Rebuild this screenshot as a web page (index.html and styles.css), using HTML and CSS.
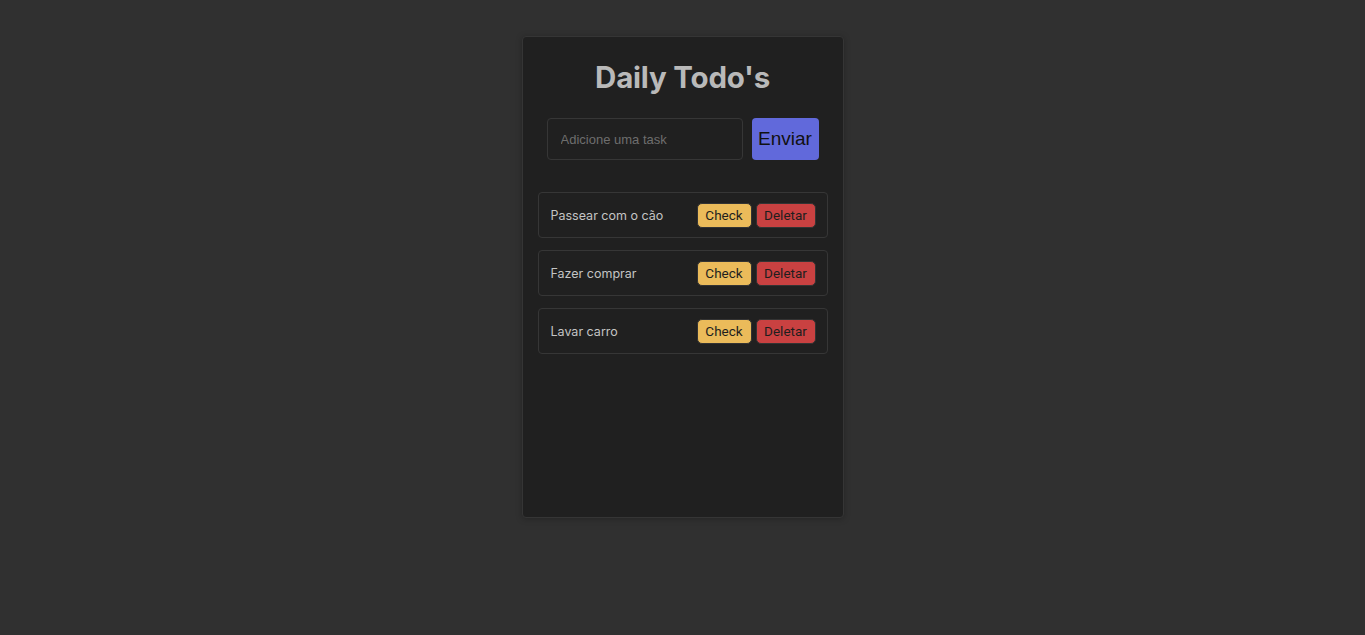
FILE: index.html
```html
<!DOCTYPE html>
<html lang="pt">
<head>
<meta charset="utf-8">
<title>Daily Todo's</title>
<link rel="stylesheet" href="styles.css">
</head>
<body>
<main class="card">
  <h1 class="title">Daily Todo's</h1>
  <form class="add-form">
    <input class="add-input" type="text" placeholder="Adicione uma task">
    <button class="add-btn" type="button">Enviar</button>
  </form>
  <ul class="tasks">
    <li class="task"><span class="task-text">Passear com o cão</span><div class="actions"><button class="btn btn-check">Check</button><button class="btn btn-del">Deletar</button></div></li>
    <li class="task"><span class="task-text">Fazer comprar</span><div class="actions"><button class="btn btn-check">Check</button><button class="btn btn-del">Deletar</button></div></li>
    <li class="task"><span class="task-text">Lavar carro</span><div class="actions"><button class="btn btn-check">Check</button><button class="btn btn-del">Deletar</button></div></li>
  </ul>
</main>
</body>
</html>
```
FILE: styles.css
```css
* { box-sizing: border-box; }
html, body { margin: 0; padding: 0; }
body {
  background: #303030;
  min-height: 635px;
  display: flex;
  justify-content: center;
  align-items: flex-start;
  padding-top: 36px;
  font-family: Inter, "Noto Sans", sans-serif;
}
.card {
  width: 322px;
  height: 482px;
  background: #202020;
  border: 1px solid #353535;
  border-radius: 4px;
  box-shadow: 0 1px 6px rgba(0,0,0,0.25);
  padding: 0 15px;
}
.title {
  margin: 21px 0 0;
  text-align: center;
  color: #b9b9b9;
  font-size: 29.5px;
  font-weight: 700;
  line-height: 38px;
  letter-spacing: -0.2px;
}
.add-form {
  display: flex;
  justify-content: center;
  gap: 9px;
  margin-top: 22px;
}
.add-input {
  width: 196px;
  height: 42px;
  background: #202020;
  border: 1px solid #363636;
  border-radius: 4px;
  padding: 0 13px;
  color: #ccc;
  font-family: "Liberation Sans", Arial, sans-serif;
  font-size: 13px;
  outline: none;
}
.add-input::placeholder { color: #6e6e6e; }
.add-btn {
  width: 67px;
  height: 42px;
  background: #6169db;
  border: none;
  border-radius: 4px;
  color: #111;
  font-family: "Liberation Sans", Arial, sans-serif;
  font-size: 19px;
  padding: 0;
}
.tasks {
  list-style: none;
  margin: 32px 0 0;
  padding: 0;
  display: flex;
  flex-direction: column;
  gap: 12px;
}
.task {
  height: 46px;
  border: 1px solid #363636;
  border-radius: 4px;
  display: flex;
  align-items: center;
  justify-content: space-between;
  padding: 0 11px 0 12px;
}
.task-text {
  color: #c4c4c4;
  font-size: 12.5px;
}
.actions { display: flex; gap: 4px; }
.btn {
  height: 25px;
  border: 1px solid #333;
  border-radius: 5px;
  font-family: Roboto, "Liberation Sans", Arial, sans-serif;
  font-size: 13.5px;
  padding: 0;
  color: #1e1e1e;
}
.btn-check { width: 55px; background: #ebbb5a; }
.btn-del { width: 60px; background: #c94141; }
```
